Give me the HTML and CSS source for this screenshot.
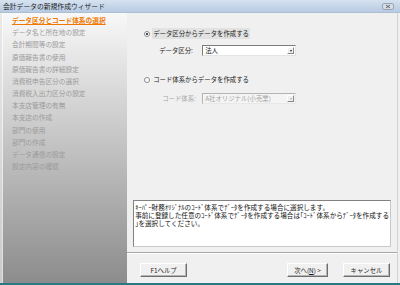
FILE: index.html
```html
<!DOCTYPE html>
<html lang="ja">
<head>
    <meta charset="UTF-8">
    <meta name="viewport" content="width=device-width, initial-scale=1.0">
    <title>会計データの新規作成ウィザード</title>
    <link rel="stylesheet" href="styles.css">
</head>
<body>
    <div class="window">
        <div class="title-bar">
            <span class="title">会計データの新規作成ウィザード</span>
            <span class="close-btn">
                <svg width="12" height="7" viewBox="0 0 12 7">
                    <rect x="0.5" y="0.5" width="11" height="6" rx="1.5" fill="#d9dee6" stroke="#98a4b2"/>
                    <path d="M4 2 L8 5 M8 2 L4 5" stroke="#59626e" stroke-width="1"/>
                </svg>
            </span>
        </div>
        <div class="wizard">
            <ul class="steps">
                <li class="current">データ区分とコード体系の選択</li>
                <li>データ名と所在地の設定</li>
                <li>会計期間等の設定</li>
                <li>原価報告書の使用</li>
                <li>原価報告書の詳細設定</li>
                <li>消費税申告区分の選択</li>
                <li>消費税入出力区分の設定</li>
                <li>本支店管理の有無</li>
                <li>本支店の作成</li>
                <li>部門の使用</li>
                <li>部門の作成</li>
                <li>データ通信の設定</li>
                <li>設定内容の確認</li>
            </ul>
            <div class="page">
                <div class="option first">
                    <span class="radio checked"></span>
                    <span class="option-label focused">データ区分からデータを作成する</span>
                </div>
                <div class="field">
                    <span class="field-label">データ区分:</span>
                    <div class="combo">
                        <span class="combo-value">法人</span>
                        <span class="combo-arrow"></span>
                    </div>
                </div>
                <div class="option second">
                    <span class="radio"></span>
                    <span class="option-label">コード体系からデータを作成する</span>
                </div>
                <div class="field disabled">
                    <span class="field-label">コード体系:</span>
                    <div class="combo">
                        <span class="combo-value">A社オリジナル(小売業)</span>
                        <span class="combo-arrow"></span>
                    </div>
                </div>

                <div class="description">
                    ｷｰﾊﾟｰ財務ｵﾘｼﾞﾅﾙのｺｰﾄﾞ体系でﾃﾞｰﾀを作成する場合に選択します。<br>
                    事前に登録した任意のｺｰﾄﾞ体系でﾃﾞｰﾀを作成する場合は｢ｺｰﾄﾞ体系からﾃﾞｰﾀを作成する<br>
                    ｣を選択してください。
                </div>

                <div class="separator"></div>
                <div class="buttons">
                    <button class="btn help">F1ヘルプ</button>
                    <button class="btn next">次へ(<u>N</u>) &gt;</button>
                    <button class="btn cancel">キャンセル</button>
                </div>
            </div>
        </div>
        <div class="bottom-edge"></div>
    </div>
</body>
</html>
```

FILE: styles.css
```css
body {
    margin: 0;
    font-family: "Noto Sans CJK JP", sans-serif;
    background-color: #f0f0f0;
}
.window {
    width: 400px;
    height: 285px;
    display: flex;
    flex-direction: column;
}
.title-bar {
    height: 13px;
    box-sizing: border-box;
    display: flex;
    align-items: center;
    justify-content: space-between;
    padding: 0 6px 0 3px;
    background: linear-gradient(#d6e2f0, #b8cbe2);
    border-bottom: 1px solid #aebfd4;
    font-size: 6.8px;
    color: #1e1e1e;
}
.close-btn {
    display: flex;
}
.wizard {
    flex: 1;
    display: flex;
}
.steps {
    width: 128px;
    box-sizing: border-box;
    margin: 0;
    padding: 1px 0 0 12px;
    list-style: none;
    background: linear-gradient(#f8f8f8, #8c8c8c);
    box-shadow: inset 2px 0 0 rgba(0, 0, 0, 0.08), inset 3px 0 0 rgba(255, 255, 255, 0.7);
}
.steps li {
    font-size: 6.7px;
    line-height: 12.17px;
    color: #9b9b9b;
    white-space: nowrap;
}
.steps li.current {
    color: #f07800;
    font-weight: bold;
    text-decoration: underline;
}
.page {
    flex: 1;
    display: flex;
    flex-direction: column;
    margin-right: 2px;
    border-right: 1px solid #d2d2d2;
}
.option {
    height: 11px;
    display: flex;
    align-items: center;
    margin-left: 17px;
    font-size: 6.4px;
    color: #1a1a1a;
}
.option.first {
    margin-top: 15px;
}
.option.second {
    margin-top: 18px;
}
.radio {
    width: 6px;
    height: 6px;
    box-sizing: border-box;
    border: 1px solid #8a8a8a;
    border-radius: 50%;
    background-color: #fff;
    margin-right: 2px;
    display: flex;
    align-items: center;
    justify-content: center;
}
.radio.checked::after {
    content: "";
    width: 2px;
    height: 2px;
    border-radius: 50%;
    background-color: #111;
}
.option-label {
    padding: 0 1px;
    line-height: 11px;
}
.option-label.focused {
    background-color: #e2e2e2;
}
.field {
    height: 11px;
    display: flex;
    align-items: center;
    margin-top: 6px;
    padding-left: 32px;
    font-size: 6.4px;
    color: #1a1a1a;
}
.field.disabled {
    margin-top: 8px;
    padding-left: 35px;
    color: #a6a6a6;
}
.field-label {
    width: 43px;
    white-space: nowrap;
}
.field.disabled .field-label {
    width: 40px;
}
.combo {
    width: 94px;
    height: 11px;
    box-sizing: border-box;
    display: flex;
    align-items: center;
    justify-content: space-between;
    background-color: #fff;
    border: 1px solid;
    border-color: #7c7c7c #e4e4e4 #e4e4e4 #7c7c7c;
}
.field.disabled .combo {
    background-color: #f4f4f4;
    border-color: #b4b4b4 #e8e8e8 #e8e8e8 #b4b4b4;
}
.combo-value {
    padding-left: 2px;
    white-space: nowrap;
}
.combo-arrow {
    width: 7px;
    height: 7px;
    box-sizing: border-box;
    margin-right: 1px;
    background-color: #f0f0f0;
    border: 1px solid;
    border-color: #fff #888 #888 #fff;
    display: flex;
    align-items: center;
    justify-content: center;
}
.combo-arrow::after {
    content: "";
    border-left: 1.5px solid transparent;
    border-right: 1.5px solid transparent;
    border-top: 2px solid #222;
}
.field.disabled .combo-arrow::after {
    border-top-color: #aaa;
}
.description {
    height: 47px;
    box-sizing: border-box;
    margin: auto 6px 0 6px;
    padding: 2px 1px 0 1px;
    background-color: #fff;
    border: 1px solid;
    border-color: #828282 #c8c8c8 #c8c8c8 #828282;
    font-size: 6.6px;
    line-height: 8px;
    color: #111;
    white-space: nowrap;
}
.separator {
    margin-top: 5px;
    border-top: 1px solid #a6a6a6;
    border-bottom: 1px solid #fff;
}
.buttons {
    height: 29px;
    box-sizing: border-box;
    display: flex;
    padding: 9px 7px 0 13px;
}
.btn {
    height: 14px;
    box-sizing: border-box;
    padding: 0;
    font-family: inherit;
    font-size: 6.4px;
    color: #1a1a1a;
    background-color: #f0f0f0;
    border: 1px solid;
    border-color: #fff #6e6e6e #6e6e6e #fff;
    box-shadow: inset -1px -1px 0 #b4b4b4;
}
.btn.help {
    width: 47px;
}
.btn.next {
    width: 41px;
    margin-left: auto;
    margin-right: 15px;
}
.btn.cancel {
    width: 47px;
}
.bottom-edge {
    height: 2px;
    background-color: #2b7885;
}
```
